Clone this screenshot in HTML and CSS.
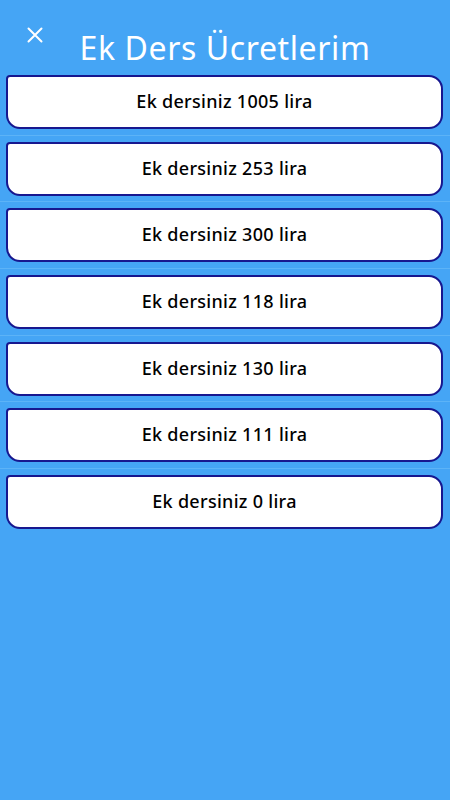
FILE: index.html
```html
<!DOCTYPE html>
<html lang="tr">
<head>
<meta charset="utf-8">
<title>Ek Ders Ücretlerim</title>
<link rel="stylesheet" href="styles.css">
</head>
<body>
<div class="screen">
  <header class="header">
    <button class="close" aria-label="Kapat">
      <svg width="16" height="16" viewBox="0 0 16 16"><path d="M1.5 1.5 L14.5 14.5 M14.5 1.5 L1.5 14.5" stroke="#fff" stroke-width="2" stroke-linecap="round" fill="none"/></svg>
    </button>
    <h1 class="title">Ek Ders Ücretlerim</h1>
  </header>
  <ul class="list">
    <li class="item"><div class="card">Ek dersiniz 1005 lira</div></li>
    <li class="item"><div class="card">Ek dersiniz 253 lira</div></li>
    <li class="item"><div class="card">Ek dersiniz 300 lira</div></li>
    <li class="item"><div class="card">Ek dersiniz 118 lira</div></li>
    <li class="item"><div class="card">Ek dersiniz 130 lira</div></li>
    <li class="item"><div class="card">Ek dersiniz 111 lira</div></li>
    <li class="item"><div class="card">Ek dersiniz 0 lira</div></li>
  </ul>
</div>
</body>
</html>
```
FILE: styles.css
```css
html, body {
  margin: 0;
  padding: 0;
  background: #45a5f5;
}
.screen {
  width: 450px;
  min-height: 800px;
  background: #45a5f5;
  font-family: "Noto Sans", "Open Sans", sans-serif;
}
.header {
  position: relative;
  height: 69px;
  display: flex;
  align-items: flex-end;
  justify-content: center;
}
.close {
  position: absolute;
  left: 27px;
  top: 27px;
  width: 16px;
  height: 16px;
  padding: 0;
  border: 0;
  background: none;
  display: flex;
}
.title {
  margin: 0 0 1px 0;
  color: #fff;
  font-size: 32px;
  font-weight: 400;
  line-height: 40px;
  letter-spacing: 0.6px;
}
.list {
  list-style: none;
  margin: 0;
  padding: 0;
}
.item {
  padding: 6px 7px 5.67px 6px;
  border-bottom: 1px solid #5cb3f7;
}
.item:last-child {
  border-bottom: 0;
}
.card {
  box-sizing: border-box;
  height: 54px;
  padding-bottom: 2px;
  background: #fff;
  border: 2px solid #17178f;
  border-radius: 4px 14px 14px 14px;
  display: flex;
  align-items: center;
  justify-content: center;
  color: #000;
  font-size: 18px;
  font-weight: 500;
  letter-spacing: 0.3px;
}
```
